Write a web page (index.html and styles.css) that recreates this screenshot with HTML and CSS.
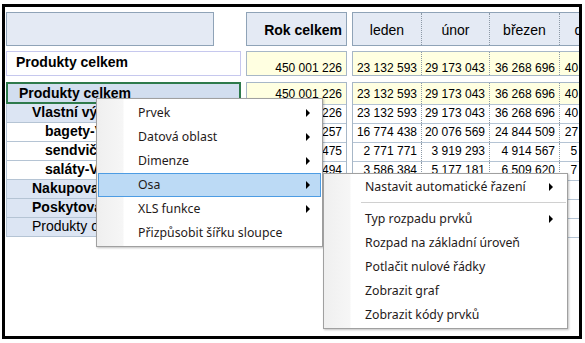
FILE: index.html
```html
<!DOCTYPE html>
<html lang="cs">
<head>
    <meta charset="UTF-8">
    <title>Report</title>
    <link rel="stylesheet" href="styles.css">
</head>
<body>
    <div class="frame">
        <div class="block head">
            <div class="corner"></div>
            <div class="rok hcell">Rok celkem</div>
            <div class="months">
                <span>leden</span><span>únor</span><span>březen</span><span>duben</span>
            </div>
        </div>

        <div class="block total">
            <div class="lab">Produkty celkem</div>
            <div class="rok ycell">450 001 226</div>
            <div class="months yrow">
                <span>23 132 593</span><span>29 173 043</span><span>36 268 696</span><span>40 512 118</span>
            </div>
        </div>

        <div class="block body">
            <div class="labels">
                <div class="r sel">Produkty celkem</div>
                <div class="r blue l1">Vlastní výroba</div>
                <div class="r l2">bagety-Vlastní výroba</div>
                <div class="r l2">sendviče-Vlastní výroba</div>
                <div class="r l2">saláty-Vlastní výroba</div>
                <div class="r blue l1">Nakupované zboží</div>
                <div class="r blue l1">Poskytované služby</div>
                <div class="r blue l1 plain">Produkty ostatní</div>
            </div>
            <div class="rok col">
                <div class="r y">450 001 226</div>
                <div class="r">387 214 226</div>
                <div class="r">276 093 257</div>
                <div class="r">54 826 475</div>
                <div class="r">56 294 494</div>
                <div class="r">41 306 118</div>
                <div class="r">21 480 882</div>
                <div class="r">0</div>
            </div>
            <div class="months col">
                <div class="r y"><span>23 132 593</span><span>29 173 043</span><span>36 268 696</span><span>40 512 118</span></div>
                <div class="r"><span>23 132 593</span><span>29 173 043</span><span>36 268 696</span><span>40 512 118</span></div>
                <div class="r"><span>16 774 438</span><span>20 076 569</span><span>24 844 509</span><span>27 930 411</span></div>
                <div class="r"><span>2 771 771</span><span>3 919 293</span><span>4 914 567</span><span>5 402 880</span></div>
                <div class="r"><span>3 586 384</span><span>5 177 181</span><span>6 509 620</span><span>7 178 827</span></div>
                <div class="r"><span>0</span><span>0</span><span>0</span><span>0</span></div>
                <div class="r"><span>0</span><span>0</span><span>0</span><span>0</span></div>
                <div class="r"><span>0</span><span>0</span><span>0</span><span>0</span></div>
            </div>
        </div>

        <div class="menu main-menu">
            <div class="item">Prvek<i class="arrow"></i></div>
            <div class="item">Datová oblast<i class="arrow"></i></div>
            <div class="item">Dimenze<i class="arrow"></i></div>
            <div class="item active">Osa<i class="arrow"></i></div>
            <div class="item">XLS funkce<i class="arrow"></i></div>
            <div class="item">Přizpůsobit šířku sloupce</div>
        </div>

        <div class="menu sub-menu">
            <div class="item">Nastavit automatické řazení<i class="arrow"></i></div>
            <div class="sep"></div>
            <div class="item">Typ rozpadu prvků<i class="arrow"></i></div>
            <div class="item">Rozpad na základní úroveň</div>
            <div class="item">Potlačit nulové řádky</div>
            <div class="item">Zobrazit graf</div>
            <div class="item">Zobrazit kódy prvků</div>
        </div>
    </div>
</body>
</html>
```

FILE: styles.css
```css
body {
    margin: 0;
    background: #fff;
    font-family: "Liberation Sans", Arial, sans-serif;
    color: #000;
}
.frame {
    box-sizing: border-box;
    position: relative;
    width: 580px;
    height: 335px;
    margin: 4px 0 0 2px;
    padding: 5px 0 0 1px;
    border: 3px solid #000;
    overflow: hidden;
}

/* table blocks */
.block {
    display: grid;
    grid-template-columns: 235px 101px 290px;
    column-gap: 5px;
}
.head {
    height: 34px;
}
.total {
    height: 25px;
    margin-top: 5px;
}
.body {
    margin-top: 6px;
}
.corner {
    width: 208px;
    box-sizing: border-box;
    background: #e4eaf4;
    border: 1px solid #8fa3b7;
}
.hcell {
    box-sizing: border-box;
    background: #e4eaf4;
    border: 1px solid #8fa3b7;
    font-weight: bold;
    font-size: 14px;
    text-align: right;
    padding: 9px 4px 0 0;
}
.months {
    display: flex;
    box-sizing: border-box;
    border: 1px solid #8fa3b7;
    border-right: none;
}
.head .months {
    background: #e4eaf4;
}
.months span {
    flex: none;
    width: 69px;
    box-sizing: border-box;
    border-right: 1px dotted #8c99a6;
}
.months span:nth-child(2) { width: 68px; }
.months span:nth-child(3) { width: 70px; }
.head .months span {
    font-size: 14px;
    text-align: center;
    padding-top: 9px;
}

.lab {
    box-sizing: border-box;
    border: 1px solid #c6c8ee;
    font-weight: bold;
    font-size: 14px;
    padding: 2px 0 0 9px;
}
.ycell, .yrow {
    box-sizing: border-box;
    background: #ffffe1;
    border: 1px solid #a7b7c7;
    font-size: 12px;
    text-align: right;
    padding: 9px 4px 0 0;
}
.yrow {
    padding: 0;
    border-right: none;
}
.yrow span {
    padding: 9px 4px 0 0;
}

/* body rows */
.labels .r,
.col .r {
    box-sizing: border-box;
    height: 19px;
    border-bottom: 1px solid #b5c4d4;
}
.labels .r {
    font-weight: bold;
    font-size: 14px;
    line-height: 17px;
    white-space: nowrap;
    overflow: hidden;
    border-left: 1px solid #b5c4d4;
    border-right: 1px solid #b5c4d4;
}
.labels .sel {
    height: 22px;
    line-height: 18px;
    background: #d2deef;
    border: 2px solid #2e7a4b;
    padding-left: 11px;
}
.labels .blue { background: #dce5f3; }
.labels .l1 { padding-left: 25px; }
.labels .l2 { padding-left: 38px; }
.labels .plain { font-weight: normal; }

.col {
    border: 1px solid #a7b7c7;
    border-bottom: none;
    box-sizing: border-box;
}
.months.col {
    display: block;
    border-right: none;
}
.col .r {
    font-size: 12px;
    text-align: right;
    line-height: 17px;
    padding-right: 4px;
}
.col .r.y {
    height: 22px;
    line-height: 22px;
    background: #ffffe1;
}
.months.col .r {
    display: flex;
    padding: 0;
}
.months.col .r span {
    text-align: right;
    padding-right: 4px;
}

/* context menus */
.menu {
    position: absolute;
    box-sizing: border-box;
    background: #fff linear-gradient(to right, #efefef, #f6f6f6 26px, #fff 27px, #fff);
    border: 1px solid #a0a0a0;
    box-shadow: 1px 1px 2px rgba(0, 0, 0, 0.25);
    font-family: "Noto Sans", "Open Sans", sans-serif;
    font-size: 12.3px;
    color: #1f1a1a;
}
.main-menu {
    left: 91px;
    top: 91px;
    width: 227px;
    height: 149px;
    padding: 2px 1px;
}
.sub-menu {
    left: 318px;
    top: 166px;
    width: 245px;
    height: 156px;
    padding: 1px;
}
.item {
    position: relative;
    box-sizing: border-box;
    height: 24px;
    line-height: 22px;
    padding-left: 39px;
    border: 1px solid transparent;
    white-space: nowrap;
}
.item.active {
    background: #bcdaf5;
    border-color: #4d9ce3;
}
.arrow {
    position: absolute;
    right: 10px;
    top: 7px;
    width: 0;
    height: 0;
    border-left: 4px solid #000;
    border-top: 4px solid transparent;
    border-bottom: 4px solid transparent;
}
.sub-menu .arrow {
    right: 12px;
}
.sep {
    height: 1px;
    margin: 3px 0 4px 36px;
    background: #d0d0d0;
}
```
